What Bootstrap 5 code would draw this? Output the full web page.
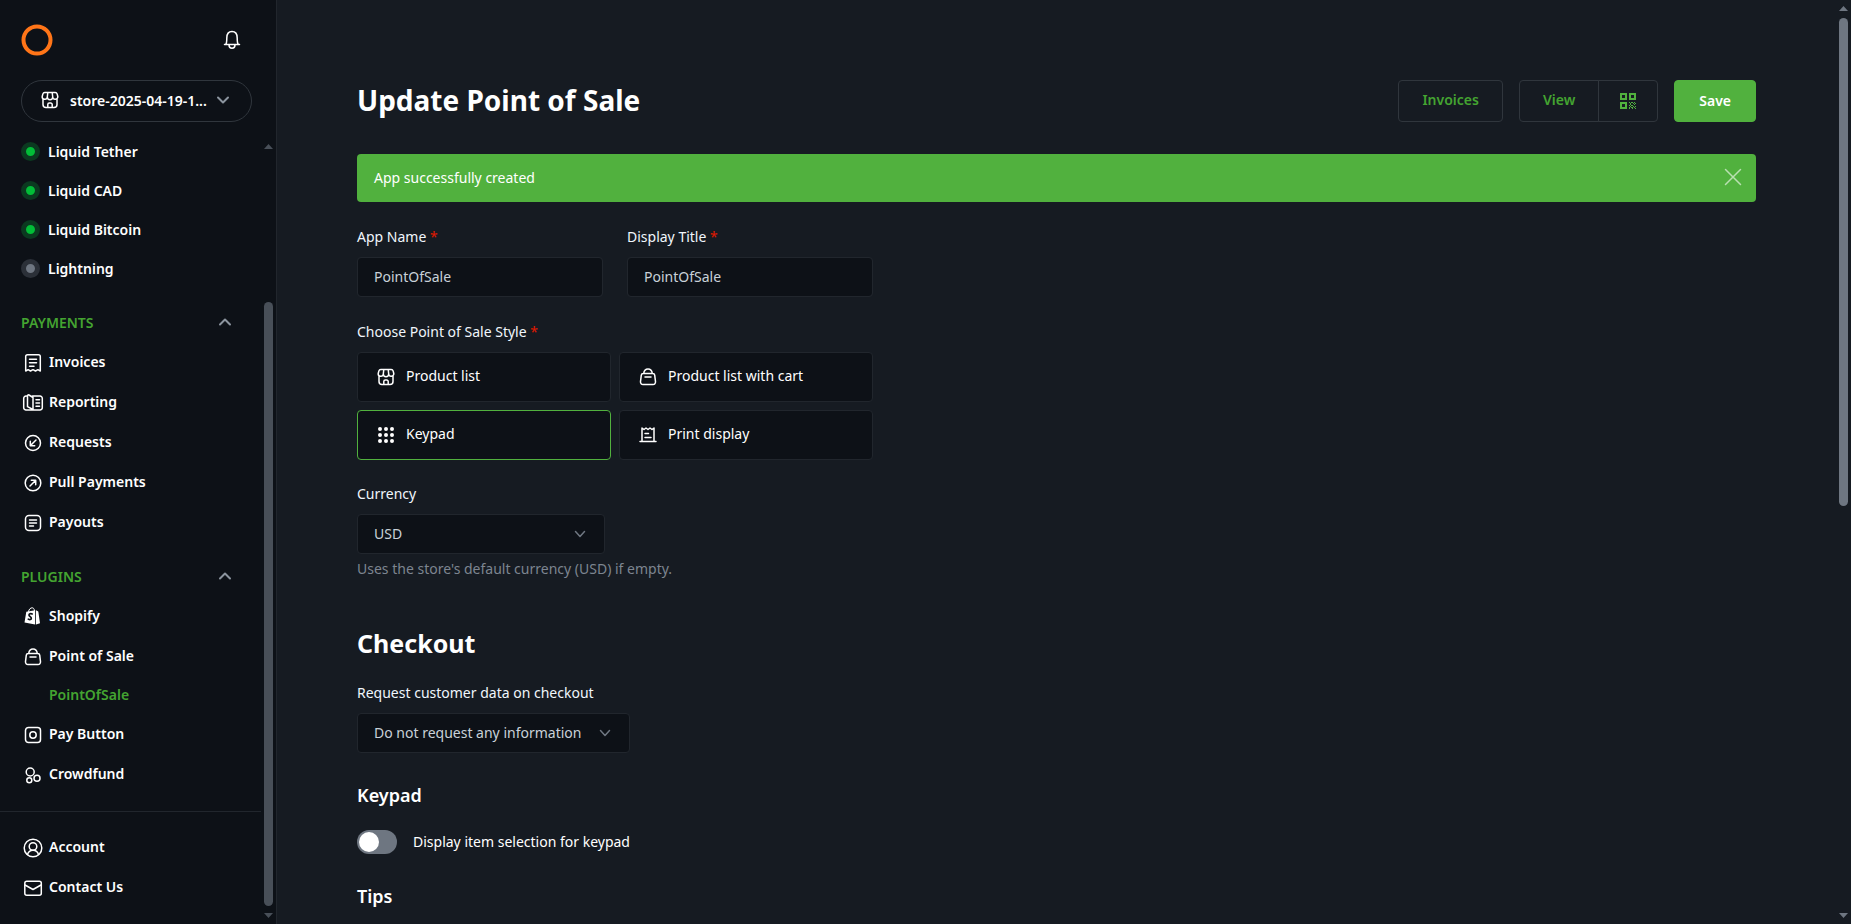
<!DOCTYPE html>
<html lang="en" data-bs-theme="dark">
<head>
<meta charset="utf-8">
<meta name="viewport" content="width=device-width, initial-scale=1">
<title>Update Point of Sale</title>
<link rel="stylesheet" href="https://cdn.jsdelivr.net/npm/bootstrap@5.3.0/dist/css/bootstrap.min.css">
<style>
:root {
  --n0: #0d1117; --n1: #161b22; --n2: #21262d; --n3: #30363d; --n4: #484f58;
  --n5: #6e7681; --n6: #8b949e; --n7: #c9d1d9; --n8: #f0f6fc;
  --brand: #51b13e; --brand-text: #44a431;
}
body { background: var(--n1); color: #fff; font-family: "Noto Sans", "Open Sans", sans-serif; font-size: 14px; line-height: 23px; }
svg { flex: none; fill: none; stroke: currentColor; stroke-width: 1.5; stroke-linecap: round; stroke-linejoin: round; }
.ico { width: 24px; height: 24px; }
.ico-sm { width: 16px; height: 16px; }

/* Sidebar */
.side { width: 277px; background: var(--n0); border-right: 1px solid var(--n2); }
.side-top { height: 80px; padding: 0 32px 0 21px; }
.logo { width: 32px; height: 32px; color: #ff7518; }
.store-btn { height: 42px; margin: 0 24px 11px 21px; padding: 0 20px 2px 16px; border: 1px solid var(--n3); border-radius: 21px; font-weight: 600; color: #fff; font-size: 14px; }
.side-nav { padding-bottom: 16px; min-width: 0; }
.side-nav a { color: #fff; font-weight: 600; text-decoration: none; padding: 0 0 2px 21px; gap: 4px; height: 40px; display: flex; align-items: center; }
.side-nav a .ico { margin-top: 3px; }
.side-nav a.wallet { height: 39px; gap: 8px; }
.side-nav a.sub-item { height: 38px; padding-left: 49px; color: var(--brand-text); }
.dot { width: 19px; height: 19px; border: 5px solid #0b3a20; border-radius: 50%; background: #02bd37; }
.dot-off { border-color: #2b3038; background: var(--n5); }
.sec { height: 40px; margin-top: 14px; padding: 0 28px 0 21px; border: 0; background: none; color: var(--brand-text); font-weight: 600; font-size: 14px; }
.wallet + .sec { margin-top: 13px; }
.side-foot { border-top: 1px solid var(--n2); margin-top: 17px; padding-top: 15px; }
.mut { color: var(--n6); stroke-width: 2; }

/* Scroll rails */
.rail { width: 15px; padding: 6px 3px; color: var(--n5); gap: 7px; }
.rail svg { width: 9px; height: 5px; fill: currentColor; stroke: none; }
.rail .thumb { background: currentColor; border-radius: 5px; height: 55%; }
.rail-side { color: var(--n4); margin-top: 5px; }
.rail-side .thumb { height: 80.5%; }

/* Main */
.page { padding: 80px 80px 16px; }
h1 { font-size: 28px; font-weight: 700; line-height: 40px; }
h2 { font-size: 25px; font-weight: 700; line-height: 29px; margin: 49px 0 24px; }
h3 { font-size: 18px; font-weight: 600; line-height: 23px; margin: 31px 0 23px; }
.btn { --bs-btn-border-radius: 4px; font-size: 14px; font-weight: 600; line-height: 22px; height: 42px; padding: 0 24px; }
.btn-line { border-color: var(--n3); color: var(--brand-text); padding: 0 23px 2px; }
.btn-line.qr { padding: 0 17px; color: var(--brand); }
.btn-brand { background: var(--brand); border-color: var(--brand); color: #fff; }
.note { background: var(--brand); border-radius: 4px; height: 48px; padding: 0 11px 2px 17px; margin: 32px 0 24px; }
.note button { color: rgba(255,255,255,.6); background: none; border: 0; padding: 0; }
.form-box { max-width: 516px; }
.form-label { margin-bottom: 10px; line-height: 21px; color: var(--n8); display: block; }
.req { color: #e11900; }
.form-control, .form-select { height: 40px; font-size: 14px; line-height: 22px; padding: 0 16px; border: 1px solid var(--n2); border-radius: 4px; background-color: var(--n0); color: var(--n7); }
.form-control { padding-bottom: 2px; }
.form-select { width: auto; padding-right: 47px; background-position: right 18px center; background-size: 12px 12px;
  background-image: url("data:image/svg+xml,%3Csvg xmlns='http://www.w3.org/2000/svg' viewBox='0 0 12 12' fill='none' stroke='%236e7681' stroke-width='1.5' stroke-linecap='round' stroke-linejoin='round'%3E%3Cpath d='M1.500 3.500 6 8.500l4.500-5'/%3E%3C/svg%3E"); }
.form-select.cur { width: 248px; }
.styles { display: grid; grid-template-columns: 1fr 1fr; gap: 8px; margin-bottom: 23px; }
.style-opt { height: 50px; padding: 0 16px 4px; gap: 8px; border: 1px solid var(--n2); border-radius: 4px; background: var(--n0); color: #fff; }
.style-opt .ico { margin-top: 3px; }
.btn-check:checked + .style-opt { border-color: var(--brand); }
.hint { color: #7d8590; margin-top: 4px; line-height: 22px; }
.form-switch { min-height: 24px; padding: 0; gap: 16px; line-height: 21px; }
.form-switch label { padding-bottom: 1px; }
.form-switch .form-check-input { width: 40px; height: 24px; margin: 0; border: 0; background-color: var(--n5); background-size: 24px 24px; background-position: left center;
  background-image: url("data:image/svg+xml,%3Csvg xmlns='http://www.w3.org/2000/svg' viewBox='0 0 24 24'%3E%3Ccircle cx='12' cy='12' r='10' fill='%23fff'/%3E%3C/svg%3E"); }
</style>
</head>
<body>
<svg class="d-none" aria-hidden="true">
  <symbol id="i-store" viewBox="0 0 24 24"><path d="M5 11v5.500a3 3 0 0 0 3 3h8a3 3 0 0 0 3-3V11M6.800 4.500h10.400a2 2 0 0 1 1.900 1.400l.7 2.600a2.500 2.500 0 0 1-5.100.5 2.700 2.700 0 0 1-5.400 0 2.500 2.500 0 0 1-5.100-.5l.7-2.600a2 2 0 0 1 1.900-1.400zM9.300 9l.5-4.500M14.700 9l-.5-4.500M9.800 19v-2.500a1.500 1.500 0 0 1 1.500-1.500h1.400a1.500 1.500 0 0 1 1.500 1.500V19"/></symbol>
  <symbol id="i-bag" viewBox="0 0 24 24"><path d="M7.300 8.500h9.400a2 2 0 0 1 2 1.700l.8 6.500a2.500 2.500 0 0 1-2.500 2.800H7a2.500 2.500 0 0 1-2.500-2.800l.8-6.500a2 2 0 0 1 2-1.700zM7.700 8.300c.4-2.700 1.900-4.300 4.300-4.300s3.900 1.600 4.300 4.300M9 12h6"/></symbol>
  <symbol id="i-up" viewBox="0 0 16 16"><path d="m3 10.500 5-5 5 5"/></symbol>
  <symbol id="i-tri" viewBox="0 0 9 5"><path d="M0 5 4.500 0 9 5z"/></symbol>
  <symbol id="i-tri-d" viewBox="0 0 9 5"><path d="M0 0l4.500 5L9 0z"/></symbol>
</svg>
<div class="d-flex min-vh-100">
  <aside class="side vh-100 sticky-top d-flex flex-column flex-shrink-0">
    <div class="side-top d-flex align-items-center justify-content-between flex-shrink-0">
      <a href="#" aria-label="Home" class="d-flex"><svg class="logo" viewBox="0 0 32 32"><circle cx="16" cy="16" r="13.500" stroke-width="4"/></svg></a>
      <button class="border-0 bg-transparent p-0 text-white d-flex" aria-label="Notifications"><svg class="ico" viewBox="0 0 24 24"><path d="M4.500 16.500h15M5.800 16.200c1-1.200 1-3 1-6.300 0-4 2-6.400 5.200-6.400s5.200 2.400 5.200 6.400c0 3.300 0 5.100 1 6.300M9 17c0 2 1.200 3.200 3 3.200s3-1.200 3-3.200"/></svg></button>
    </div>
    <button class="store-btn bg-transparent d-flex align-items-center flex-shrink-0">
      <svg class="ico me-2"><use href="#i-store"/></svg>
      <span class="text-nowrap flex-fill text-start">store-2025-04-19-1...</span>
      <svg class="ico-sm mut" viewBox="0 0 16 16"><path d="m3 5.500 5 5 5-5"/></svg>
    </button>
    <div class="d-flex flex-fill">
      <nav class="side-nav flex-fill d-flex flex-column">
        <a href="#" class="wallet"><span class="dot"></span>Liquid Tether</a>
        <a href="#" class="wallet"><span class="dot"></span>Liquid CAD</a>
        <a href="#" class="wallet"><span class="dot"></span>Liquid Bitcoin</a>
        <a href="#" class="wallet"><span class="dot dot-off"></span>Lightning</a>

        <button class="sec d-flex align-items-center justify-content-between">PAYMENTS<svg class="ico-sm mut"><use href="#i-up"/></svg></button>
        <a href="#"><svg class="ico" viewBox="0 0 24 24"><path d="M4.700 20V5.500a1.800 1.800 0 0 1 1.800-1.800h11a1.800 1.800 0 0 1 1.800 1.800V20l-2.400-1.300L14.500 20 12 18.700 9.500 20l-2.400-1.300zM8.500 8.200h7M8.500 11.700h7M8.500 15.200h4.500"/></svg>Invoices</a>
        <a href="#"><svg class="ico" viewBox="0 0 24 24"><path d="M6.500 5H5a2.300 2.300 0 0 0-2.300 2.300v9.400A2.300 2.300 0 0 0 5 19h14a2.300 2.300 0 0 0 2.300-2.300V7.300A2.300 2.300 0 0 0 19 5h-7.500M6.500 5.500v10.200l5.500 2.800V6.500L8 4c-1-.4-1.500.2-1.500 1.500zM15 8.700h3.500M15 12h3.500M15 15.300h3.500"/></svg>Reporting</a>
        <a href="#"><svg class="ico" viewBox="0 0 24 24"><circle cx="12" cy="12" r="7.500"/><path d="m15 9-5.500 5.500M9.300 10.300v4.400h4.400"/></svg>Requests</a>
        <a href="#"><svg class="ico" viewBox="0 0 24 24"><circle cx="12" cy="12" r="7.800"/><path d="m9 15 5.500-5.500M10.300 9.300h4.400v4.400"/></svg>Pull Payments</a>
        <a href="#"><svg class="ico" viewBox="0 0 24 24"><rect x="4.500" y="4.500" width="15" height="15" rx="3.500"/><path d="M8.500 9h7M8.500 12h7M8.500 15h4"/></svg>Payouts</a>

        <button class="sec d-flex align-items-center justify-content-between">PLUGINS<svg class="ico-sm mut"><use href="#i-up"/></svg></button>
        <a href="#"><svg class="ico" viewBox="0 0 24 24"><path d="M7.500 6.500C8 4 9.600 2.800 11.200 2.800c1.300 0 2.200 1.200 2.300 3" stroke-width="1"/><path d="M5.300 6.800 14.200 5.200V19.500L3.500 17.500zM15 5.300l2.300 1.300L19 18.300l-4 1.200z" fill="currentColor" stroke="none"/><path d="M11.200 8.900c-1.600-.8-3.200-.1-3.200 1.200 0 1.500 2.300 1.500 2.300 3.100 0 1.500-1.600 1.800-3 .9" stroke="#0d1117" stroke-width="1.700"/></svg>Shopify</a>
        <a href="#"><svg class="ico"><use href="#i-bag"/></svg>Point of Sale</a>
        <a href="#" class="sub-item">PointOfSale</a>
        <a href="#"><svg class="ico" viewBox="0 0 24 24"><rect x="4.500" y="4.500" width="15" height="15" rx="3"/><circle cx="12" cy="12" r="3.200"/></svg>Pay Button</a>
        <a href="#"><svg class="ico" viewBox="0 0 24 24"><circle cx="9.200" cy="9" r="4"/><circle cx="16" cy="15.300" r="3"/><circle cx="8.300" cy="17.300" r="2.500"/></svg>Crowdfund</a>

        <div class="side-foot">
          <a href="#"><svg class="ico" viewBox="0 0 24 24"><circle cx="12" cy="12" r="8.800"/><circle cx="12" cy="10.500" r="3.800"/><path d="M6.500 18.500c.8-2.700 2.500-4.200 5.500-4.200s4.700 1.500 5.500 4.200"/></svg>Account</a>
          <a href="#"><svg class="ico" viewBox="0 0 24 24"><rect x="3.800" y="5.300" width="16.500" height="14" rx="2"/><path d="m4 9 8 4.500L20 9"/></svg>Contact Us</a>
        </div>
      </nav>
      <div class="rail rail-side d-flex flex-column flex-shrink-0" aria-hidden="true">
        <svg><use href="#i-tri"/></svg>
        <div class="flex-fill d-flex flex-column justify-content-end"><div class="thumb"></div></div>
        <svg><use href="#i-tri-d"/></svg>
      </div>
    </div>
  </aside>

  <main class="page flex-fill">
    <div class="d-flex align-items-start justify-content-between">
      <h1 class="m-0">Update Point of Sale</h1>
      <div class="d-flex gap-3">
        <button class="btn btn-line">Invoices</button>
        <div class="btn-group">
          <button class="btn btn-line">View</button>
          <button class="btn btn-line qr" aria-label="Show QR code"><svg class="ico" viewBox="0 0 24 24"><path d="M5 5h5v5H5zM14 5h5v5h-5zM5 14h5v5H5z" stroke-width="2" stroke-linejoin="miter"/><path d="M13 13h1v1h-1zM15 13h2v1h-2zM18 13h1v1h-1zM14 14h1v2h-1zM17 14h1v1h-1zM19 14h1v1h-1zM13 16h1v1h-1zM15 16h2v1h-2zM18 15h1v1h-1zM14 17h1v1h-1zM17 17h1v1h-1zM19 17h1v1h-1zM13 18h1v2h-1zM15 18h2v1h-2zM18 18h1v1h-1zM16 19h1v1h-1zM19 19h1v1h-1z" fill="currentColor" stroke="none"/></svg></button>
        </div>
        <button class="btn btn-brand">Save</button>
      </div>
    </div>

    <div class="note d-flex align-items-center justify-content-between" role="alert">
      <span>App successfully created</span>
      <button class="d-flex" aria-label="Close"><svg class="ico" viewBox="0 0 24 24"><path d="m4.500 4.500 15 15M19.500 4.500l-15 15"/></svg></button>
    </div>

    <form class="form-box">
      <div class="d-flex gap-4 mb-4">
        <div class="flex-fill">
          <label class="form-label" for="appName">App Name <span class="req">*</span></label>
          <input class="form-control" id="appName" value="PointOfSale">
        </div>
        <div class="flex-fill">
          <label class="form-label" for="title">Display Title <span class="req">*</span></label>
          <input class="form-control" id="title" value="PointOfSale">
        </div>
      </div>

      <div role="radiogroup" aria-labelledby="styleLabel">
        <div class="form-label" id="styleLabel">Choose Point of Sale Style <span class="req">*</span></div>
        <div class="styles">
          <div><input class="btn-check" type="radio" name="style" id="s1"><label class="style-opt d-flex align-items-center" for="s1"><svg class="ico"><use href="#i-store"/></svg>Product list</label></div>
          <div><input class="btn-check" type="radio" name="style" id="s2"><label class="style-opt d-flex align-items-center" for="s2"><svg class="ico"><use href="#i-bag"/></svg>Product list with cart</label></div>
          <div><input class="btn-check" type="radio" name="style" id="s3" checked><label class="style-opt d-flex align-items-center" for="s3"><svg class="ico" viewBox="0 0 24 24"><path d="M6 6h0M12 6h0M18 6h0M6 12h0M12 12h0M18 12h0M6 18h0M12 18h0M18 18h0" stroke-width="4"/></svg>Keypad</label></div>
          <div><input class="btn-check" type="radio" name="style" id="s4"><label class="style-opt d-flex align-items-center" for="s4"><svg class="ico" viewBox="0 0 24 24"><path d="M4 18.500h16M6 18V5l2 1.500L10 5l2 1.500L14 5l2 1.500L18 5v13M9 10.500h3.500M9 14.500h6"/></svg>Print display</label></div>
        </div>
      </div>

      <label class="form-label" for="currency">Currency</label>
      <select class="form-select cur" id="currency"><option>USD</option></select>
      <div class="hint">Uses the store's default currency (USD) if empty.</div>

      <h2>Checkout</h2>
      <label class="form-label" for="request">Request customer data on checkout</label>
      <select class="form-select" id="request"><option>Do not request any information</option></select>

      <h3>Keypad</h3>
      <div class="form-switch d-flex align-items-center">
        <input class="form-check-input" type="checkbox" role="switch" id="items">
        <label for="items">Display item selection for keypad</label>
      </div>

      <h3 class="mb-0">Tips</h3>
    </form>
  </main>

  <div class="rail vh-100 sticky-top d-flex flex-column flex-shrink-0" aria-hidden="true">
    <svg><use href="#i-tri"/></svg>
    <div class="flex-fill"><div class="thumb"></div></div>
    <svg><use href="#i-tri-d"/></svg>
  </div>
</div>
<script src="https://cdn.jsdelivr.net/npm/bootstrap@5.3.0/dist/js/bootstrap.bundle.min.js"></script>
</body>
</html>
